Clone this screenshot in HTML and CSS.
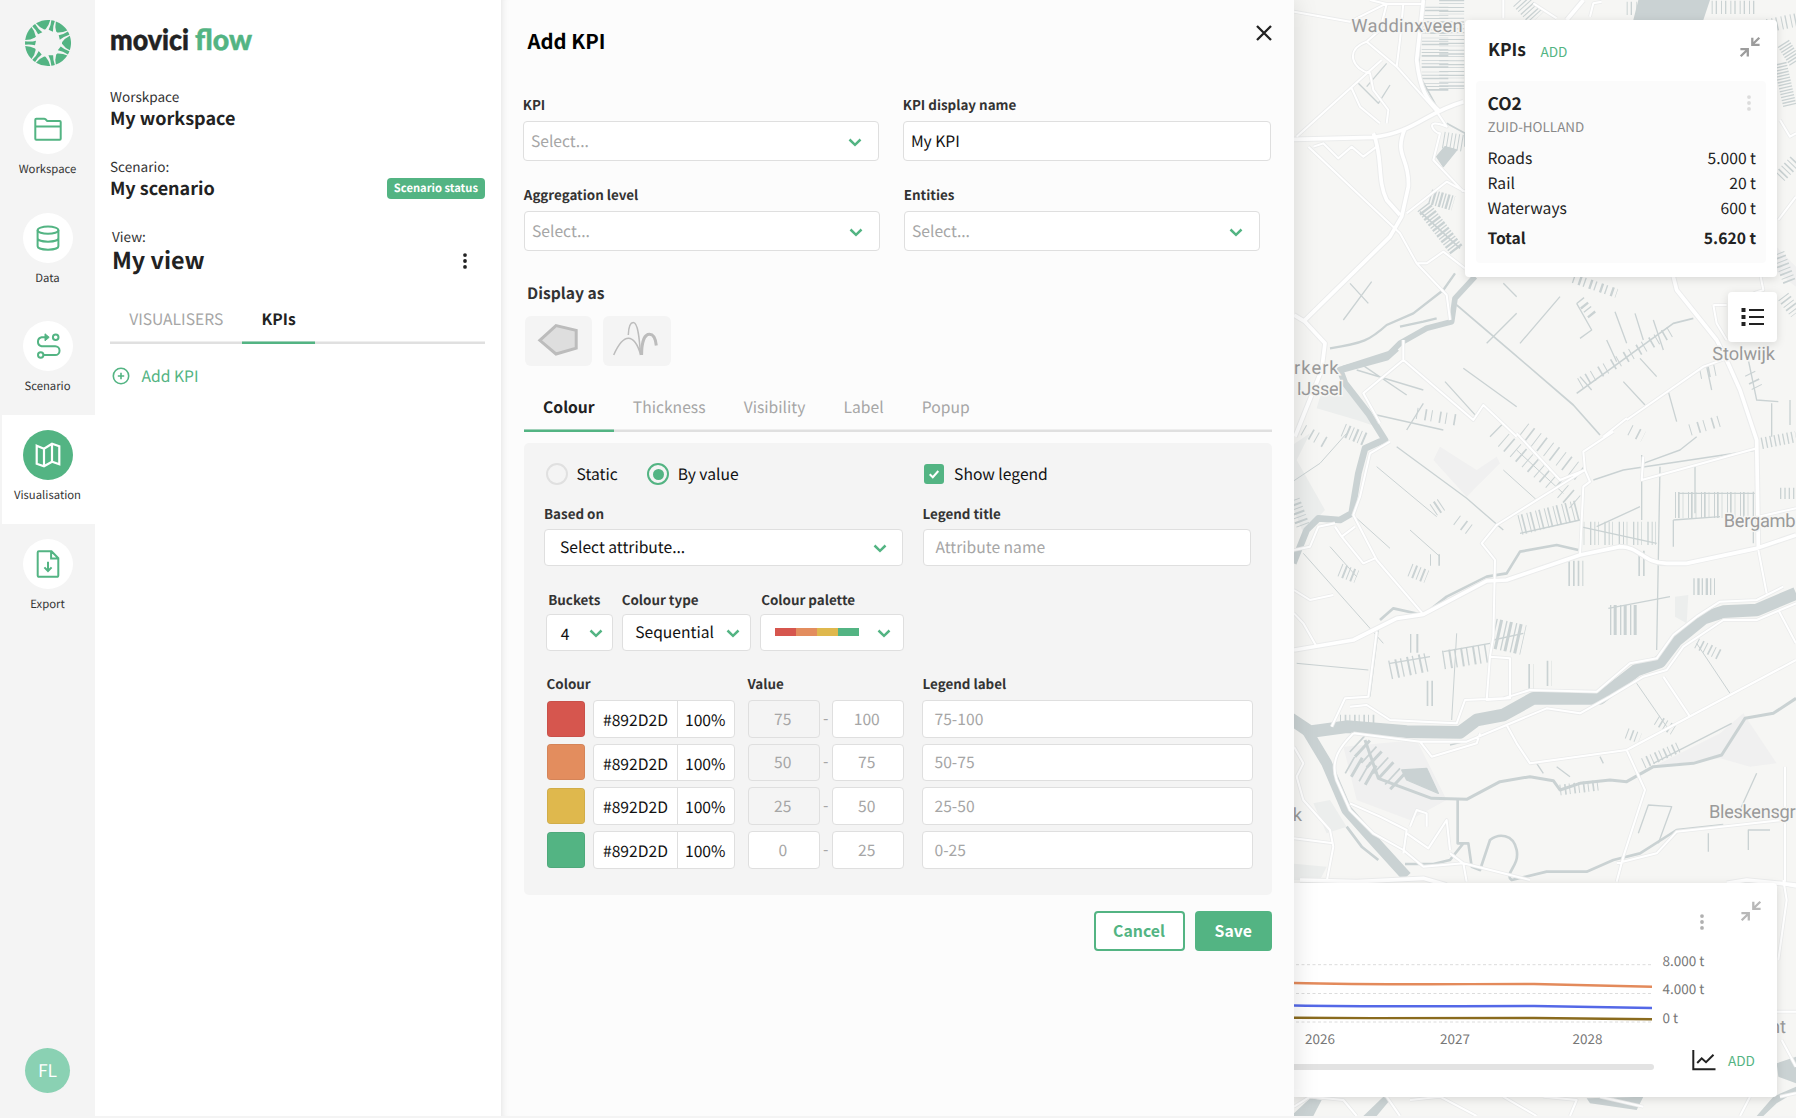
FILE: index.html
```html
<!DOCTYPE html>
<html lang="en">
<head>
<meta charset="utf-8">
<title>Movici Flow – Add KPI</title>
<link rel="stylesheet" href="styles.css">
</head>
<body>
<svg class="defs" width="0" height="0" aria-hidden="true">
  <defs>
    <symbol id="chev" viewBox="0 0 14 9"><path d="M1.5 1.5 7 6.8 12.5 1.5" fill="none" stroke="currentColor" stroke-width="2.5"/></symbol>
    <symbol id="collapse" viewBox="0 0 22 22"><path d="M20.3 1.7 13.6 8.3M13.3 1.8V8.8H20.6M1.7 20.3 8.4 13.7M1.4 13.2H8.8V20.4" fill="none" stroke="currentColor" stroke-width="2.3"/></symbol>
    <symbol id="kebab" viewBox="0 0 6 18"><g fill="currentColor"><circle cx="3" cy="3.1" r="1.9"/><circle cx="3" cy="9" r="1.9"/><circle cx="3" cy="14.9" r="1.9"/></g></symbol>
    <g id="petal"><path d="M21.8 -7.3A23 23 0 0 1 21.8 7.3Q17 5 14 .7V-.7Q17 -5 21.8 -7.3Z"/><path transform="rotate(25.7)" d="M22.9 -1.8A23 23 0 0 1 22.9 1.8Q17 .9 12 2.3L13 -2.3Q18 -1 22.9 -1.8Z"/></g>
  </defs>
</svg>
<div class="app">
  <nav class="rail">
    <svg class="mark" viewBox="-23 -23 46 46"><g fill="#53b483"><use href="#petal"/><use href="#petal" transform="rotate(51.43)"/><use href="#petal" transform="rotate(102.86)"/><use href="#petal" transform="rotate(154.29)"/><use href="#petal" transform="rotate(205.71)"/><use href="#petal" transform="rotate(257.14)"/><use href="#petal" transform="rotate(308.57)"/></g></svg>
    <a class="nav"><span class="dot"><svg viewBox="-15 -15 30 30"><path d="M-12.7 9.7V-9.3a1 1 0 0 1 1-1H-3.9a2 2 0 0 1 1.4.6L-.8-8H11.7a1 1 0 0 1 1 1V9.7a1 1 0 0 1-1 1H-11.7a1 1 0 0 1-1-1ZM-12.7 -2.6H12.7"/></svg></span>Workspace</a>
    <a class="nav"><span class="dot"><svg viewBox="-15 -15 30 30"><ellipse cy="-7.8" rx="10.4" ry="3.6"/><path d="M-10.4 -7.8V8.2C-10.4 12.8 10.4 12.8 10.4 8.2V-7.8M-10.4 .2C-10.4 4.8 10.4 4.8 10.4 .2"/></svg></span>Data</a>
    <a class="nav"><span class="dot"><svg viewBox="-15 -15 30 30"><path d="M-1 -8.7H-6.4A4.6 4.6 0 0 0-6.4 .3H7.2A4.3 4.3 0 0 1 7.2 9H-4.6"/><circle cx="7.7" cy="-8.7" r="2.8"/><circle cx="-7.3" cy="9" r="2.7"/><path d="M-3 -12.2 1.2 -8.7-3 -5.2Z" fill="currentColor" stroke-width="1"/></svg></span>Scenario</a>
    <a class="nav active"><span class="dot"><svg viewBox="-15 -15 30 30"><path d="M-11.3 -9.3-4 -6.3 4 -11.2 11.3 -8.8V9.3L4 6.8-4 11.3-11.3 8.7ZM-4 -6.3V11.3M4 -11.2V6.8"/></svg></span>Visualisation</a>
    <a class="nav"><span class="dot"><svg viewBox="-15 -15 30 30"><path d="M-8.8 -12.7H3.5L10.3 -5.8V11.6a1.2 1.2 0 0 1-1.2 1.2H-9.1a1.2 1.2 0 0 1-1.2-1.2V-11.5a1.2 1.2 0 0 1 1.2-1.2ZM3.1 -12.5V-5.6H10M0 -2.2V7M-3.6 3.4 0 7 3.6 3.4"/></svg></span>Export</a>
    <div class="avatar">FL</div>
  </nav>

  <aside class="side">
    <svg class="wordmark" viewBox="0 0 146 44"><text x="0" y="32" textLength="79" lengthAdjust="spacingAndGlyphs" fill="#222" stroke="#222">movici</text><text x="85" y="32" textLength="57" lengthAdjust="spacingAndGlyphs" fill="#53b483" stroke="#53b483">flow</text></svg>
    <div class="ctx first"><p class="cap">Worskpace</p><p class="name">My workspace</p></div>
    <div class="ctx row"><div><p class="cap">Scenario:</p><p class="name">My scenario</p></div><span class="badge">Scenario status</span></div>
    <div class="ctx row view"><div><p class="cap">View:</p><p class="big">My view</p></div><svg class="kebab"><use href="#kebab"/></svg></div>
    <div class="tabs side-tabs"><span class="tab">VISUALISERS</span><span class="tab on">KPIs</span></div>
    <a class="add"><svg viewBox="0 0 18 18"><circle cx="9" cy="9" r="7.7"/><path d="M9 5.8V12.2M5.8 9H12.2"/></svg>Add KPI</a>
  </aside>

  <main class="editor">
    <header class="head"><h1>Add KPI</h1><svg class="close" viewBox="0 0 16 16"><path d="M1 1 15 15M15 1 1 15"/></svg></header>
    <div class="fields">
      <label class="f"><b>KPI</b><span class="box ph">Select...<svg class="chev"><use href="#chev"/></svg></span></label>
      <label class="f wide"><b>KPI display name</b><span class="box">My KPI</span></label>
    </div>
    <div class="fields second">
      <label class="f"><b>Aggregation level</b><span class="box ph">Select...<svg class="chev"><use href="#chev"/></svg></span></label>
      <label class="f"><b>Entities</b><span class="box ph">Select...<svg class="chev"><use href="#chev"/></svg></span></label>
    </div>
    <h2>Display as</h2>
    <div class="tiles">
      <svg viewBox="0 0 67.5 50"><path d="M14.8 24.3 31 9.6 51.2 14.4V32.2L31 38Z" fill="#dedede" stroke="#bcbcbc" stroke-width="3"/></svg>
      <svg viewBox="0 0 67.5 50"><g fill="none" stroke="#bcbcbc"><path d="M10.7 39C16 27 21 22.3 25.5 22.3S35 28 37.5 39M25.3 19C25.6 11 27.5 6.6 30.3 6.6C35 6.6 36.5 23 37.5 39" stroke-width="1.5"/><path d="M38.6 39C38.6 26 41.5 18.3 46.5 18.3C50 18.3 52.5 22 53.3 29.5" stroke-width="3"/></g></svg>
    </div>
    <div class="tabs main-tabs"><span class="tab on">Colour</span><span class="tab">Thickness</span><span class="tab">Visibility</span><span class="tab">Label</span><span class="tab">Popup</span></div>
    <section class="panel">
      <div class="opts">
        <span class="opt"><i class="radio"></i>Static</span>
        <span class="opt by"><i class="radio on"></i>By value</span>
        <span class="opt legend"><i class="check"><svg viewBox="0 0 20 20"><path d="M5.7 10.2 8.8 13.2 14.3 7"/></svg></i>Show legend</span>
      </div>
      <div class="attr">
        <label class="f"><b>Based on</b><span class="box in">Select attribute...<svg class="chev"><use href="#chev"/></svg></span></label>
        <label class="f"><b>Legend title</b><span class="box ph lt">Attribute name</span></label>
      </div>
      <div class="kinds">
        <label class="f k1"><b>Buckets</b><span class="box"><em>4</em><svg class="chev"><use href="#chev"/></svg></span></label>
        <label class="f k2"><b>Colour type</b><span class="box">Sequential<svg class="chev"><use href="#chev"/></svg></span></label>
        <label class="f k3"><b>Colour palette</b><span class="box"><span class="pal"><i class="red"></i><i class="orange"></i><i class="yellow"></i><i class="green"></i></span><svg class="chev"><use href="#chev"/></svg></span></label>
      </div>
      <div class="grid hd"><b class="c1">Colour</b><b class="c2">Value</b><b class="c3">Legend label</b></div>
      <div class="grid"><i class="sw red"></i><span class="hex"><span>#892D2D</span><span>100%</span></span><span class="box num off">75</span><span class="dash">-</span><span class="box num">100</span><span class="box ph ll">75-100</span></div>
      <div class="grid"><i class="sw orange"></i><span class="hex"><span>#892D2D</span><span>100%</span></span><span class="box num off">50</span><span class="dash">-</span><span class="box num">75</span><span class="box ph ll">50-75</span></div>
      <div class="grid"><i class="sw yellow"></i><span class="hex"><span>#892D2D</span><span>100%</span></span><span class="box num off">25</span><span class="dash">-</span><span class="box num">50</span><span class="box ph ll">25-50</span></div>
      <div class="grid"><i class="sw green"></i><span class="hex"><span>#892D2D</span><span>100%</span></span><span class="box num">0</span><span class="dash">-</span><span class="box num">25</span><span class="box ph ll">0-25</span></div>
    </section>
    <div class="actions"><button class="btn ghost">Cancel</button><button class="btn">Save</button></div>
  </main>

  <section class="map">
    <svg class="tiles-svg" viewBox="12 0 1506 3348" preserveAspectRatio="none">
      <defs>
        <path id="major" d="M12 418 250 412C380 395 400 340 520 305M400 0 380 180C390 270 410 300 450 335M250 400C280 470 260 540 290 600L330 645M345 385C310 470 360 470 355 560L335 650 300 710 40 965M12 945 45 965 105 1030 95 1110 15 1310M880 0 830 60M1150 830 1160 870 1280 1020 1310 1080 1350 1170 1400 1320 1405 1640M12 1950 190 1920 320 1855 400 1843 590 1743 650 1740 870 1665 990 1640C1050 1640 1060 1690 1130 1690L1190 1690 1400 1645 1518 1605M30 2640 200 2645 400 2635 470 2655M1310 2650 1370 2640 1518 2655"/>
        <path id="minor" d="M12 35 180 65 290 10M240 0 290 12H400M230 125 320 200 440 335 470 380C400 350 430 400 450 400L430 480 520 575M290 12 270 90 230 125C160 150 190 210 240 220L250 270 295 330 290 370M340 10 330 120 320 200M275 180 20 410M185 265 210 320 270 370M55 440 330 700 380 790 470 885 480 960M350 640 470 545 525 575M70 440 100 430 145 475 185 440 220 470 260 440M380 790 410 790 460 755 525 805M640 0V55M730 10 800 55M900 50 910 10 935 5M1010 1260 1240 1100 1310 1075M1270 915H1310M1270 915 1280 970 1310 1020M940 1310 1010 1255M340 1080 550 1260 580 1215 680 1310M340 1020V1080L220 1180 270 1270M1470 360 1500 410 1518 400M1465 660 1518 590M1410 820 1420 870 1390 880M680 1300 810 1440 885 1410 880 1355 970 1295M885 1410 900 1445 880 1460 870 1665M885 1410 620 1575 575 1630 615 1680 610 1910 600 1970 660 1975 660 2095 590 2100 600 1970M1060 1370 1055 1440 1400 1345M1405 1550 1518 1525M300 1325 240 1360 210 1490 190 1545 260 1680 400 1843M135 1580 155 1610 220 1690 255 1675M155 1610 195 1580M85 1580 135 1570M85 1580 60 1640 12 1650M12 1770 60 1800 130 1785M12 1840 40 1870 80 1940M260 1895 235 2090 165 2095 125 2180M180 2120 230 2115 300 2160 400 2165 500 2170 525 2100 640 2095 720 2070 920 2075 1020 1990 1100 1975 1150 1905 1220 1850 1290 1805 1400 1800 1480 1760M190 2200C150 2240 120 2280 140 2340L180 2430 250 2500 340 2550 400 2600 520 2590 640 2620 720 2640M190 2200 390 2225 530 2225 650 2175 770 2125 870 2140 960 2090 1060 2030 1130 2010 1180 1940 1300 1860 1400 1860 1518 1810M390 2225 425 2270 560 2230 570 2200M650 2175 680 2230 720 2290 1010 2250 1518 1980M1120 2030 1200 2150M1010 2250 1065 2370 1000 2570 980 2645M980 2590 1100 2560 1160 2495 1480 2460M1485 2300V2645M12 2240 40 2290 20 2330 40 2400 120 2490 130 2540 110 2645M12 2515 130 2530M180 2410 270 2450 350 2490 340 2560M350 2500 415 2545 470 2460 480 2550M360 2480 380 2430 410 2440V2480M480 2560 520 2590 530 2645M1405 1650 1430 1780M1465 1830 1518 1930M12 3320 60 3290 160 3300 200 3348M290 3290 330 3348M360 3300 450 3290 560 3348M640 3290 740 3348M760 3290 860 3300 840 3348M930 3290 1060 3320M1460 3035H1518M1475 3120 1518 3200M1470 3290 1518 3280M1380 3290 1350 3348M1465 2880 1490 2700 1480 2640M1465 2650 1518 2660"/>
      </defs>
      <rect x="0" y="0" width="1518" height="3354" fill="#f6f6f4"/>
      <g fill="#eceeed">
        <path d="M0 1340 60 1300 20 1380 105 1530 40 1600 0 1500ZM90 1190 150 1150 260 1280 200 1260 80 1225ZM1155 1790 1195 1785 1190 1870 1155 1850ZM70 2410 120 2400 170 2480 110 2500ZM0 2590 110 2600 90 2640H0Z"/>
        <path d="M430 1380 450 1340 560 1410 620 1370 630 1390 530 1490ZM1090 2300 1290 2200 1360 2140 1460 2290 1380 2300 1290 2275ZM160 2240 380 2220 470 2400 360 2460 200 2400ZM1340 720 1420 700 1518 800V860Z" fill="#f0f0f0"/>
      </g>
      <!-- water -->
      <g fill="none" stroke="#cad2d3" stroke-linejoin="round">
        <path d="M555 830 495 895 485 965 410 985 330 1030 300 1060 160 1105" stroke-width="17"/>
        <path d="M320 1045 290 1072 150 1110 165 1150 235 1240 285 1320 270 1325 225 1345 205 1420 185 1540 150 1560 85 1555 50 1590 10 1690" stroke-width="20"/>
        <path d="M120 1045C220 1030 240 1020 290 975L370 940 460 870 495 820M330 980 400 965 440 955" stroke-width="7"/>
        <path d="M0 2155 60 2195 170 2180 350 2195 510 2197 560 2160 640 2145 730 2095 860 2095 930 2095 1040 2010 1110 1985 1160 1920 1240 1855 1300 1835 1400 1830 1518 1780" stroke-width="38"/>
        <path d="M50 2190 110 2290 170 2430 250 2520 350 2630" stroke-width="32"/>
        <path d="M225 2220 265 2335 330 2360 425 2395 530 2398 630 2345 720 2330 790 2342 810 2370 870 2350 960 2340 1010 2345 1090 2300 1210 2290 1295 2265 1365 2155 1450 2140 1518 2095" stroke-width="9"/>
        <path d="M503 2400V2530H535L545 2600 570 2610 600 2520C625 2500 670 2500 680 2550S640 2620 665 2640L770 2615 890 2615 970 2580 1050 2560 1160 2490 1300 2475M345 2592H430L480 2580 520 2530M170 2480 215 2540 265 2580" stroke-width="8"/>
        <path d="M270 1860 310 1825 400 1845 470 1790 590 1730 650 1720 690 1655 800 1635 865 1650" stroke-width="8"/>
        <path d="M335 2310 410 2305 445 2380 350 2340ZM440 470 465 440 500 450 460 500Z" fill="#cad2d3" stroke-width="4"/>
        <path d="M1045 0H1260L1240 60H1030Z" fill="#cad2d3" stroke="none"/>
        <path d="M470 370 525 400V440M500 915 670 1060 850 1215 930 1305M860 1180 1150 970 1210 955M390 635 510 745M405 0 395 60 385 220 440 320" stroke-width="5"/>
        <path d="M320 1340 530 1495 640 1590M1060 1390 1170 1350 1220 1310M1055 1365V1560M1110 1400 1100 1950M920 1580 1050 1520M910 1440 1000 1410 1400 1350M1150 1560 1290 1550" stroke-width="4"/>
        <path d="M0 1450 90 1390 170 1300M200 1555 300 1645M40 1660 280 1930M260 1400 440 1550M360 1590 450 1670M120 1640 200 1730M640 1410 740 1500M680 1350 820 1480M500 1900 485 2160M265 1890 240 2090M20 1990 235 2010M1040 2050 1130 2180M1220 1930 1320 2080" stroke-width="3"/>
        <path d="M1165 1480H1400M1150 1560V1640M1215 1400V1540M1390 1475V1630M690 1600 870 1560M870 1580 1100 1630M300 1990 420 1970M460 1955 600 1930M610 1920 700 1900M955 1825 1140 1790" stroke-width="4"/>
        <path d="M160 960 245 845M180 850 235 910M290 190 230 260M205 250 265 310 300 255M465 1145 560 1250M520 1105 680 1220M640 850 680 890M590 1030 680 940M690 1030 810 890M860 910 905 990 870 1015M975 935 1010 1030M950 1020 980 1085M1035 940 1060 1020M1090 960 1120 1050M870 1130 905 1170M1000 1145 1065 1215M1050 1075 1100 1130M1135 1175 1160 1265M1250 1100 1265 1170M1375 1080 1400 1200 1465 1205M1445 1210V1310M1500 1200V1275M200 1110 400 1170M210 1090 350 1185M260 1245 460 1290M350 1290 400 1210M600 1310 640 1270" stroke-width="4"/>
        <path d="M1045 2500 1075 2415 1145 2420 1105 2530M1350 2430 1400 2320M1255 2500V2555M1375 2550V2490H1440M1090 2290 1325 2170M540 2220 480 2235M740 2290 760 2320M800 2300 840 2330M930 2270 940 2290" stroke-width="4"/>
      </g>
      <!-- field ditches: wide strokes dashed across their direction -->
      <g fill="none" stroke="#cad2d3">
        <path d="M435 20V280" stroke-width="80" stroke-dasharray="3 6 5 11 2 7"/>
        <path d="M485 0V270" stroke-width="75" stroke-dasharray="4 5 2 10 3 8"/>
        <path d="M690 0 740 55" stroke-width="55" stroke-dasharray="3 8 4 6"/>
        <path d="M1010 25H1040M1265 22H1400M1420 80 1518 60" stroke-width="40" stroke-dasharray="3 9 4 12"/>
        <path d="M1480 130 1518 190M1470 190 1500 320" stroke-width="40" stroke-dasharray="4 5"/>
        <path d="M400 620 500 750M420 590 490 610" stroke-width="45" stroke-dasharray="4 5 7 5"/>
        <path d="M460 420 520 430" stroke-width="50" stroke-dasharray="3 8"/>
        <path d="M1470 530 1518 480M1480 890 1518 940M1465 760 1500 850" stroke-width="38" stroke-dasharray="3 8 5 9"/>
        <path d="M850 835 980 880M870 900 910 950" stroke-width="28" stroke-dasharray="4 14 7 9"/>
        <path d="M1155 1515H1395" stroke-width="78" stroke-dasharray="3 6 5 9 2 14"/>
        <path d="M690 1575 865 1530" stroke-width="60" stroke-dasharray="3 7 5 12"/>
        <path d="M870 1600H1110" stroke-width="70" stroke-dasharray="3 8 2 17 4 9"/>
        <path d="M960 1860H1045M610 1900 700 1920" stroke-width="90" stroke-dasharray="4 7 9 10"/>
        <path d="M300 2010 420 1985M460 1980 590 1960M360 1930H390" stroke-width="56" stroke-dasharray="4 15 6 11"/>
        <path d="M410 2080H435M715 2030H730M770 2020H785M1045 1690H1070M835 1720H880" stroke-width="76" stroke-dasharray="5 9"/>
        <path d="M1210 1760H1275" stroke-width="50" stroke-dasharray="4 8 7 6"/>
        <path d="M640 1320 860 1510M700 1290 870 1420" stroke-width="50" stroke-dasharray="3 18 5 21"/>
        <path d="M150 1710 200 1730M360 1710 410 1730M430 1530 460 1510M160 1290 230 1320M10 1500 40 1580" stroke-width="40" stroke-dasharray="3 9 6 8"/>
        <path d="M200 2230 330 2350M180 2290 250 2330" stroke-width="66" stroke-dasharray="5 14 9 20"/>
        <path d="M150 2160H260M1060 2290 1170 2240M1100 2160 1150 2190M1010 2200 1050 2215M1220 1930 1290 1965M810 2370 930 2355" stroke-width="32" stroke-dasharray="3 11 5 9"/>
        <path d="M380 1240 500 1260M40 1290 110 1330M1020 1290 1060 1310M1200 1290 1300 1260M870 1150 1150 990M1230 1120 1280 1110M1380 1120 1410 1180M420 1680H460M500 1560 540 1590" stroke-width="34" stroke-dasharray="3 22 5 14"/>
        <path d="M1415 1330 1518 1310M1470 1480H1518" stroke-width="34" stroke-dasharray="4 9"/>
      </g>
      <path d="M12 3340 60 3295 95 3300 70 3348H12ZM220 3348 280 3290 300 3300 260 3348ZM890 3295 1060 3290 1040 3330 900 3310ZM1460 2640M1460 2620 1518 2570M1460 3190 1518 3170V3250L1465 3230ZM1460 2790M1400 3348 1450 3290 1518 3260V3275L1460 3310 1420 3348Z" fill="#cad2d3"/>
      <!-- roads: casing below, surface on top -->
      <g fill="none" stroke-linejoin="round">
        <g stroke="#ebecec"><use href="#minor" stroke-width="11"/><use href="#major" stroke-width="17"/></g>
        <g stroke="#fff"><use href="#minor" stroke-width="6"/><use href="#major" stroke-width="11"/></g>
      </g>
      <g class="places">
        <text x="184" y="96" textLength="334">Waddinxveen</text>
        <text x="12" y="1122" textLength="134">rkerk</text>
        <text x="20" y="1185" textLength="138">IJssel</text>
        <text x="1267" y="1080" textLength="188">Stolwijk</text>
        <text x="1301" y="1580" textLength="216">Bergamb</text>
        <text x="1257" y="2455" textLength="260">Bleskensgr</text>
        <text x="8" y="2463">k</text>
        <text x="1440" y="3098">nt</text>
      </g>
    </svg>

    <article class="card kpis">
      <header><h3>KPIs</h3><a>ADD</a><svg class="collapse"><use href="#collapse"/></svg></header>
      <div class="kpi">
        <div class="kh"><h3>CO2</h3><svg class="kebab"><use href="#kebab"/></svg></div>
        <p class="region">ZUID-HOLLAND</p>
        <dl><dt>Roads</dt><dd>5.000 t</dd><dt>Rail</dt><dd>20 t</dd><dt>Waterways</dt><dd>600 t</dd></dl>
        <dl class="total"><dt>Total</dt><dd>5.620 t</dd></dl>
      </div>
    </article>
    <button class="card list"><svg viewBox="0 0 24 20"><path d="M.5 1h4v4h-4zM.5 8h4v4h-4zM.5 15h4v4h-4z" fill="#222"/><path d="M8 3H23M8 10H23M8 17H23" stroke="#222" stroke-width="2"/></svg></button>

    <article class="card chart">
      <div class="tools"><svg class="kebab"><use href="#kebab"/></svg><svg class="collapse"><use href="#collapse"/></svg></div>
      <div class="plot">
        <svg class="lines" viewBox="0 0 358 64"><g fill="none"><path d="M2 3.7H358M2 32.5H358M2 61H358" stroke="#dcdcdc" stroke-dasharray="3 2.5"/><path d="M0 22C70 23.8 100 23.3 240 23L358 25.8" stroke="#e38a5b" stroke-width="2.4"/><path d="M0 44.5C80 45.8 120 45.2 240 45L358 47" stroke="#5468e7" stroke-width="2.4"/><path d="M0 56.8C80 57.6 150 56.8 240 57L358 58.2" stroke="#8a6b1e" stroke-width="2.4"/></g></svg>
        <ul class="ylab"><li>8.000 t</li><li>4.000 t</li><li>0 t</li></ul>
      </div>
      <div class="years"><span>2026</span><span>2027</span><span>2028</span></div>
      <div class="foot"><div class="scroll"></div><svg viewBox="0 0 24 21"><path d="M1.3 0V19.3H23.5" /><path d="M5.2 13 9.7 8.3 14 12.2 21.5 4.8"/></svg><a>ADD</a></div>
    </article>
  </section>
</div>
</body>
</html>
```
FILE: styles.css
```css
* { box-sizing: border-box; margin: 0; padding: 0; }
body { width: 1796px; height: 1118px; overflow: hidden; background: #f4f4f4; color: #222; font: 15.65px/24px "Noto Sans CJK SC", "Open Sans", sans-serif; text-rendering: geometricPrecision; }
.defs { position: absolute; }
i, em { font-style: normal; }
svg { display: block; flex: none; }
.app { display: grid; grid-template-columns: 95px 406px 793px 502px; height: 1116px; }
.kebab { width: 6px; height: 18px; }
.collapse { width: 22px; height: 22px; color: #9c9c9c; }

/* navigation rail */
.rail { background: #f4f4f4; display: flex; flex-direction: column; align-items: center; }
.mark { width: 46px; height: 46px; margin: 20px 0 23px; }
.nav { width: 95px; height: 108.7px; display: flex; flex-direction: column; align-items: center; padding-top: 15px; font-size: 11.3px; line-height: 18px; color: #333; }
.dot { width: 50px; height: 50px; border-radius: 50%; background: #fff; color: #53b483; display: flex; align-items: center; justify-content: center; margin-bottom: 6px; }
.dot svg { width: 30px; height: 30px; fill: none; stroke: currentColor; stroke-width: 2; }
.nav.active { background: linear-gradient(90deg, #f4f4f4 2px, #fff 2px); }
.active .dot { background: #53b483; color: #fff; }
.active .dot svg { stroke-width: 2.2; }
.avatar { width: 45px; height: 45px; border-radius: 50%; background: #8ad1b3; color: #fff; font-size: 17.5px; line-height: 46px; text-align: center; margin-top: auto; margin-bottom: 23px; }

/* workspace side panel */
.side { background: #fff; padding: 17.5px 16px 0 15px; }
.wordmark { width: 146px; height: 44px; }
.wordmark text { font: 900 29px Lato, sans-serif; stroke-width: .5px; }
.ctx { margin-top: 26px; }
.ctx.first { margin-top: 24.5px; }
.cap { font-size: 13.6px; line-height: 20px; color: #333; }
.name { font-size: 18px; font-weight: 700; line-height: 25px; margin-bottom: -1px; }
.row { display: flex; justify-content: space-between; }
.badge { align-self: flex-end; height: 21px; padding: 0 7px; border-radius: 4px; background: #53b483; color: #fff; font-size: 11.2px; font-weight: 700; line-height: 21px; margin-bottom: 1.5px; }
.view { padding-left: 2px; }
.big { font-size: 23.3px; font-weight: 700; line-height: 27px; }
.view .kebab { margin: 25.5px 17px 0 0; }
.tabs { display: flex; color: #a6a6a6; box-shadow: inset 0 -2.5px #e0e0e0; }
.tab.on { color: #222; font-weight: 700; box-shadow: inset 0 -2.5px #53b483; }
.side-tabs { margin-top: 27px; height: 44px; line-height: 38.5px; }
.side-tabs .tab { padding: 0 19.2px; }
.add { display: flex; align-items: center; gap: 11.5px; margin: 19.5px 0 0 2px; color: #53b483; }
.add svg { width: 18px; height: 18px; fill: none; stroke: #53b483; stroke-width: 1.6; }

/* KPI editor */
.editor { position: relative; z-index: 2; background: #fcfcfc; padding: 0 22px 0 22px; box-shadow: 0 0 24px rgba(0,0,0,.13), inset 8px 0 8px -8px rgba(0,0,0,.12); clip-path: inset(0 -40px 0 0); }
.head { display: flex; justify-content: space-between; padding: 25px 0 0 4.5px; }
h1 { font-size: 20.3px; line-height: 31px; color: #000; }
.close { width: 16px; height: 16px; stroke: #222; stroke-width: 2.3; }
.fields { display: flex; gap: 24px; margin: 37.5px 0 0 -.3px; }
.fields.second { margin: 23px 0 0 .8px; }
.f { display: block; width: 356px; }
.f.wide { width: 368.5px; }
.f b, .hd b { display: block; font-size: 13.4px; line-height: 20px; color: #333; }
.box { display: flex; align-items: center; justify-content: space-between; height: 40px; border: 1px solid #dfdfdf; border-radius: 4px; background: #fff; color: #111; padding: 0 15.5px 0 7.2px; margin-top: 7px; }
.ph { color: #a6a6a6; }
.chev { width: 14px; height: 9px; color: #53b483; margin-top: 3px; }
h2 { font-size: 15.65px; line-height: 24px; color: #333; margin: 30.5px 0 0 4px; }
.tiles { display: flex; gap: 11px; margin: 10.5px 0 0 1.8px; }
.tiles svg { width: 67.5px; height: 50px; border-radius: 6px; background: #f4f4f4; }
.main-tabs { margin: 21.5px 0 0 1px; height: 44.5px; line-height: 39px; }
.main-tabs .tab { padding: 0 19.1px; }
.panel { margin: 11px 0 0 1px; height: 452px; background: #f4f4f4; border-radius: 5px; padding: 19.5px 20px 0; }
.opts { display: flex; color: #111; }
.opt { display: flex; align-items: center; gap: 8.5px; margin-left: 2px; }
.by { margin-left: 29.5px; }
.legend { margin-left: 185.5px; gap: 10px; }
.radio { width: 22px; height: 22px; border: 2px solid #e0e0e0; border-radius: 50%; display: flex; }
.radio.on { border-color: #53b483; }
.radio.on::after { content: ""; width: 11px; height: 11px; margin: auto; border-radius: 50%; background: #53b483; }
.check { width: 20px; height: 20px; border-radius: 3px; background: #53b483; }
.check path { fill: none; stroke: #fff; stroke-width: 2; }
.attr { display: flex; gap: 19.5px; margin-top: 16.5px; }
.attr .f:first-child { width: 359px; }
.attr .f:last-child { width: 328px; }
.panel .box { height: 37.5px; margin-top: 6px; }
.panel .chev { margin-top: 2px; }
.box.in { padding-left: 15px; }
.box.lt, .box.ll { padding-left: 12px; }
.kinds { display: flex; gap: 8.5px; margin: 22.5px 0 0 2.2px; }
.kinds b { margin-bottom: -1px; }
.k1 { width: 67px; } .k2 { width: 129.5px; } .k3 { width: 144px; }
.k1 b { padding-left: 2px; } .k3 b { padding-left: 1.5px; }
.k1 .box { padding: 0 9.5px 0 13.5px; } .k1 em { padding-top: 3px; }
.k2 .box { padding: 0 10.5px 0 12.5px; }
.k3 .box { padding: 0 11.5px 0 14px; }
.pal { display: flex; } .pal i { width: 21.2px; height: 8px; }
.red { background: #d6564e; } .orange { background: #e38d5e; } .yellow { background: #dfb84d; } .green { background: #53b483; }
.grid { display: grid; grid-template-columns: 46px 155px 72.5px 11.5px 90px 331px; margin: 0 0 6.2px 2.5px; width: 706px; align-items: center; }
.hd { margin-top: 21px; margin-bottom: 6px; }
.hd b { grid-row: 1; line-height: 22px; }
.c1 { grid-column: 1; } .c2 { grid-column: 3; } .c3 { grid-column: 6; padding-left: 1px; }
.panel .grid .box { margin: 0; }
.sw { width: 38px; height: 36px; border-radius: 4px; box-shadow: inset 0 0 0 .5px rgba(0,0,0,.12); }
.hex { display: flex; width: 142px; height: 37.5px; border: 1px solid #dfdfdf; border-radius: 4px; background: #fff; color: #111; line-height: 37.5px; }
.hex span:first-child { width: 84px; padding-left: 9.5px; border-right: 1px solid #dfdfdf; }
.hex span:last-child { padding-left: 7.5px; }
.num { width: 72px; justify-content: center; color: #a6a6a6; }
.num.off { background: #f4f4f4; }
.panel .box.num { padding: 0 1.5px 0 0; color: #a6a6a6; }
.dash { color: #a6a6a6; text-align: center; margin-top: -2px; }
.actions { display: flex; justify-content: flex-end; gap: 10px; margin-top: 16px; }
.btn { height: 40px; width: 77.5px; border: 0; border-radius: 4px; background: #53b483; color: #fff; font: 700 15.8px/24px "Noto Sans CJK SC", sans-serif; }
.btn.ghost { width: 91px; border: 2.5px solid #53b483; background: #fff; color: #53b483; }

/* map and floating cards */
.map { position: relative; overflow: hidden; }
.tiles-svg { width: 502px; height: 1116px; }
.places { font-family: Roboto, sans-serif; font-size: 55px; font-weight: 400; fill: #9a9a9a; stroke: #f6f6f4; stroke-width: 9px; paint-order: stroke; }
.card { position: absolute; background: #fff; border: 0; border-radius: 4px; box-shadow: 0 2px 10px rgba(0,0,0,.13); }
h3 { font-size: 17.4px; line-height: 24px; }
.card a { color: #53b483; font-size: 13.6px; line-height: 20px; }
.kpis { left: 171px; top: 19.5px; width: 312px; height: 257px; padding: 17px 11px 0; }
.kpis header { display: flex; align-items: flex-start; padding: 0 5px 0 12px; height: 24px; }
.kpis header h3 { margin-top: 1.8px; }
.kpis header a { margin: 4px auto 0 14.5px; }
.kpis .collapse { margin-top: -1px; }
.kpi { margin-top: 20.5px; height: 182px; border-radius: 4px; background: #fbfbfb; padding: 11px 10px 0 11.5px; }
.kh { display: flex; justify-content: space-between; }
.kh .kebab { color: #dcdcdc; margin: 2px 4.5px 0 0; }
.region { font-size: 13.4px; line-height: 20px; color: #888; }
dl { display: grid; grid-template-columns: 1fr auto; line-height: 25px; margin-top: 9.3px; }
dd { text-align: right; }
.total { font-weight: 700; margin-top: 5px; }
.list { left: 434px; top: 292px; width: 49px; height: 49.5px; padding: 15px 12.5px; }
.list svg { width: 24px; height: 20px; }
.chart { left: 0; top: 883px; width: 483px; height: 213.5px; border-radius: 0 4px 4px 0; font-size: 13.5px; line-height: 20px; color: #777; }
.tools { display: flex; justify-content: flex-end; gap: 35px; padding: 17px 15px 0; color: #b0b0b0; height: 78px; }
.tools .kebab { margin-top: 12.5px; } .tools .collapse { color: #b8b8b8; }
.plot { display: flex; gap: 10.5px; }
.lines { width: 358px; height: 64px; }
.ylab { list-style: none; line-height: 28.7px; margin-top: -15.5px; height: 79.5px; }
.years { display: flex; margin: 2.7px 0 0 11px; }
.years span { width: 135px; }
.years span:nth-child(2) { width: 132.5px; }
.foot { display: flex; align-items: flex-start; margin-top: 2px; }
.scroll { width: 360px; height: 6.5px; border-radius: 0 4px 4px 0; background: #e3e3e3; margin-top: 14px; }
.foot svg { width: 24px; height: 21px; margin-left: 38px; fill: none; stroke: #222; stroke-width: 2; }
.foot a { margin-left: 12px; }
```
